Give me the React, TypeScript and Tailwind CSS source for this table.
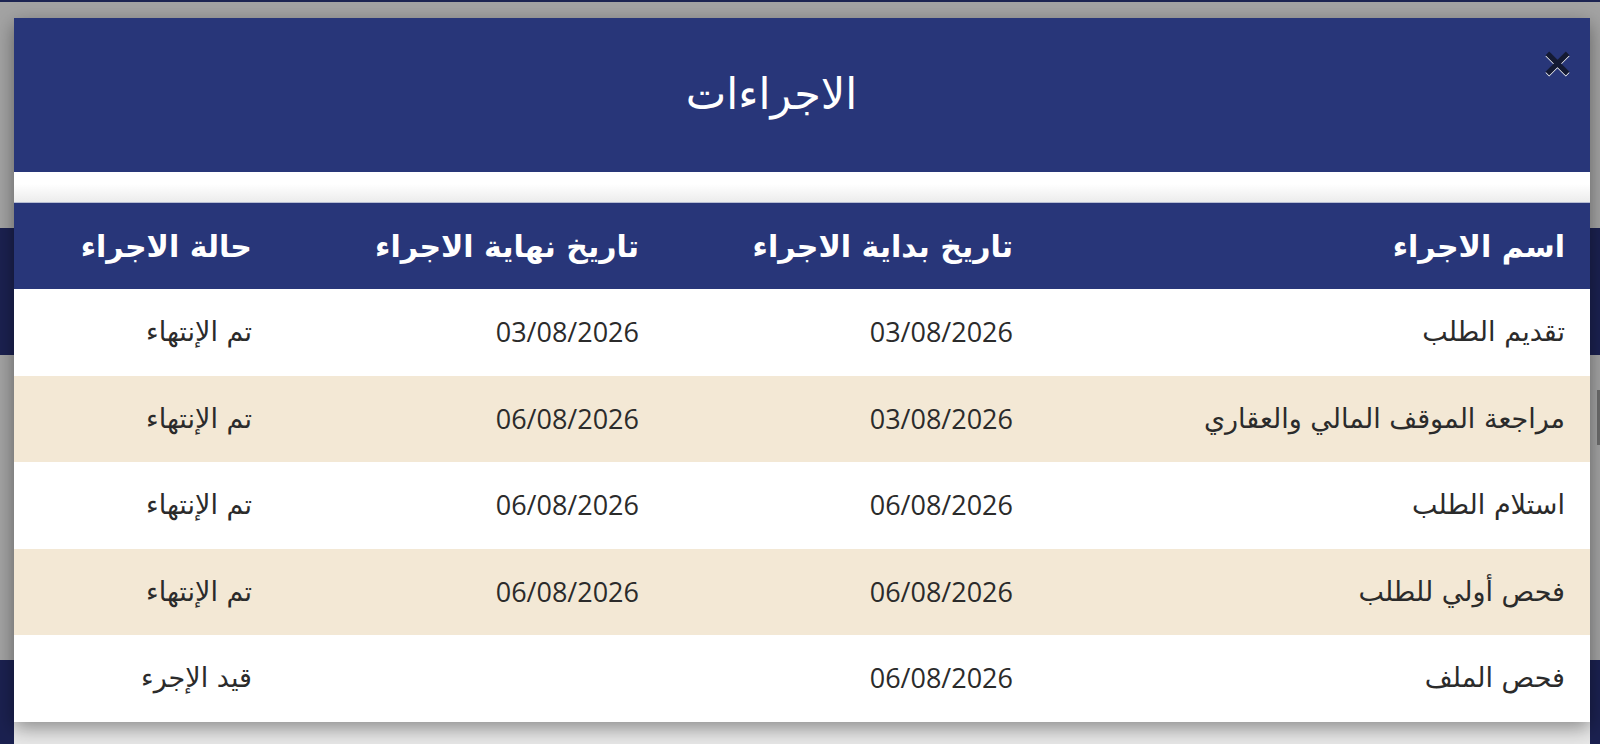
type Step = {
  name: string;
  start: string;
  end: string;
  status: string;
};

const steps: Step[] = [
  { name: "تقديم الطلب", start: "03/08/2026", end: "03/08/2026", status: "تم الإنتهاء" },
  { name: "مراجعة الموقف المالي والعقاري", start: "03/08/2026", end: "06/08/2026", status: "تم الإنتهاء" },
  { name: "استلام الطلب", start: "06/08/2026", end: "06/08/2026", status: "تم الإنتهاء" },
  { name: "فحص أولي للطلب", start: "06/08/2026", end: "06/08/2026", status: "تم الإنتهاء" },
  { name: "فحص الملف", start: "06/08/2026", end: "", status: "قيد الإجرء" },
];

const font = "font-['DejaVu_Sans','Noto_Sans_Arabic',sans-serif]";

function CloseIcon() {
  return (
    <svg viewBox="0 0 24 24" className="h-[25px] w-[25px] drop-shadow-[0_1.5px_0_#ffffff]">
      <path d="M4 4 L20 20 M20 4 L4 20" stroke="#141a33" strokeWidth="5" strokeLinecap="square" fill="none" />
    </svg>
  );
}

export default function App() {
  return (
    <div className={`relative h-[744px] w-[1600px] overflow-hidden ${font}`}>
      {/* page behind the backdrop */}
      <div className="flex h-full flex-col">
        <div className="h-[2px] bg-[#1c2452]" />
        <div className="h-[226px] bg-[#a3a3a3]" />
        <div className="h-[127px] bg-[#1b2150]" />
        <div className="flex h-[305px] flex-col bg-[#a3a3a3]">
          <div className="mt-[35px] ml-auto h-[55px] w-[3px] bg-[#6b6b6b]" />
        </div>
        <div className="flex-1 bg-[#1b2150]" />
      </div>

      {/* modal */}
      <div className="absolute left-[14px] top-[18px] flex h-[726px] w-[1576px] flex-col bg-[#e8e8e8]">
        <div className="flex flex-col bg-white shadow-[0_6px_18px_rgba(0,0,0,0.4)]">
          <div className="flex h-[154px] items-center bg-[#283679]">
            <h2 className="flex-1 pb-[2px] text-center text-[43px] leading-none text-white" dir="rtl">
              الاجراءات
            </h2>
            <button type="button" className="mr-[5px] mt-[17px] flex h-[56px] w-[56px] items-center justify-center self-start">
              <CloseIcon />
            </button>
          </div>
          <div className="h-[31px] border-b border-[#b7bdd3] bg-gradient-to-b from-white from-40% to-[#ececec]" />

          <table dir="rtl" className="w-full table-fixed border-collapse">
            <colgroup>
              <col className="w-[552px]" />
              <col className="w-[374px]" />
              <col className="w-[387px]" />
              <col className="w-[263px]" />
            </colgroup>
            <thead>
              <tr className="h-[86px] bg-[#283679] text-white">
                {["اسم الاجراء", "تاريخ بداية الاجراء", "تاريخ نهاية الاجراء", "حالة الاجراء"].map((h) => (
                  <th key={h} className="pr-[25px] text-right text-[30px] font-bold">
                    {h}
                  </th>
                ))}
              </tr>
            </thead>
            <tbody className="text-[27px] text-[#2b2b2b]">
              {steps.map((s, i) => (
                <tr key={s.name} className={i % 2 === 1 ? "h-[86px] bg-[#f3e8d5]" : "h-[87px] bg-white"}>
                  <td className="pr-[25px] text-right">{s.name}</td>
                  <td className="pr-[25px] text-right font-['Open_Sans',sans-serif]">{s.start}</td>
                  <td className="pr-[25px] text-right font-['Open_Sans',sans-serif]">{s.end}</td>
                  <td className="pr-[25px] text-right">{s.status}</td>
                </tr>
              ))}
            </tbody>
          </table>
        </div>
      </div>
    </div>
  );
}
